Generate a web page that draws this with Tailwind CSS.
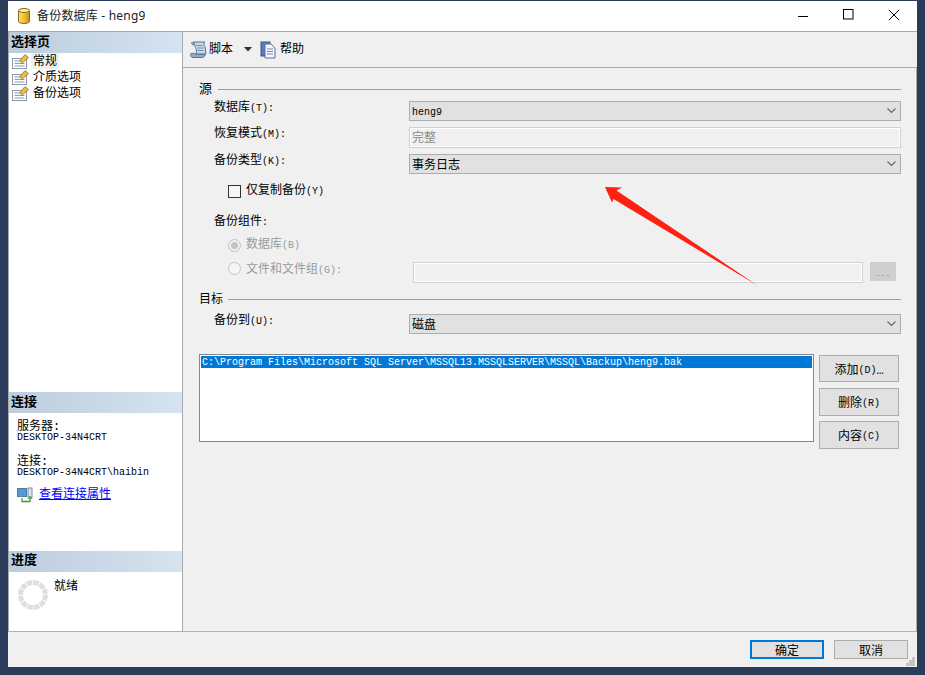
<!DOCTYPE html>
<html>
<head>
<meta charset="utf-8">
<script src="https://cdn.jsdelivr.net/npm/@tailwindcss/browser@4"></script>
</head>
<body class="m-0 overflow-hidden">
<div class="relative w-[925px] h-[675px] bg-[#2b3c5b] pl-2 pt-px pr-2 pb-2 font-['Liberation_Mono','Noto_Sans_CJK_SC',monospace] text-xs text-black">
  <div class="w-[909px] h-[666px] flex flex-col bg-[#f0f0f0]">
    <!-- title bar -->
    <div class="h-[31px] shrink-0 bg-white border-b border-[#a9a9a9] flex items-center pl-[10px]">
      <svg class="w-[12px] h-[16px] shrink-0" viewBox="0 0 12 16"><defs><linearGradient id="db" x1="0" x2="1" y1="0" y2="0"><stop offset="0" stop-color="#f9e07a"/><stop offset=".5" stop-color="#f2c032"/><stop offset="1" stop-color="#c98d10"/></linearGradient></defs><path d="M.5 2.500v11c0 1 2.500 2 5.500 2s5.500-1 5.500-2v-11z" fill="url(#db)" stroke="#8c6a1c"/><ellipse cx="6" cy="2.500" rx="5.500" ry="2" fill="#fbeaa0" stroke="#8c6a1c"/></svg>
      <span class="ml-[7px] text-[12px] text-[#222] font-['Noto_Sans','Noto_Sans_CJK_SC',sans-serif] tracking-[0.2px]">备份数据库 - heng9</span>
      <div class="ml-auto flex items-center h-full pb-[2px]">
        <svg class="w-[12px] h-[12px] mr-[34px]" viewBox="0 0 12 12"><path d="M1 7.500h10" stroke="#000" stroke-width="1"/></svg>
        <svg class="w-[12px] h-[12px] mr-[33px]" viewBox="0 0 12 12"><rect x=".5" y=".5" width="9.500" height="9.500" fill="none" stroke="#000"/></svg>
        <svg class="w-[12px] h-[12px] mr-[17px]" viewBox="0 0 12 12"><path d="M.8.8l10.400 10.400M11.200.8L.8 11.200" stroke="#000" stroke-width="1"/></svg>
      </div>
    </div>
    <div class="flex flex-1 min-h-0 border-b border-[#b0b0b8]">
      <!-- left pane -->
      <div class="w-[175px] shrink-0 bg-white border-x border-[#a9a9b0] flex flex-col">
        <div class="h-[21px] shrink-0 bg-gradient-to-r from-[#bccddd] to-[#d6e3f0] pl-[2px] text-[13px] font-bold leading-[21px]">选择页</div>
        <div class="h-[339px] shrink-0">
          <div class="h-[16px] flex items-center"><svg class="w-[17px] h-[16px] ml-[3px] shrink-0" viewBox="0 0 17 16"><rect x=".5" y="5.500" width="14" height="10" fill="#fff" stroke="#8b98a8"/><path d="M2.500 8h5M2.500 10.500h10M2.500 13h10" stroke="#7f9cc0"/><path d="M7.500 8L13 1.500l3.500 3-6 5.500z" fill="#ecbf3f" stroke="#76662a" stroke-width=".7"/></svg><span class="ml-[2px] w-[28px] h-[16px] bg-[#f0f0f0] pl-[2px] pt-[3px] leading-[13px]">常规</span></div>
          <div class="h-[16px] flex items-center"><svg class="w-[17px] h-[16px] ml-[3px] shrink-0" viewBox="0 0 17 16"><rect x=".5" y="5.500" width="14" height="10" fill="#fff" stroke="#8b98a8"/><path d="M2.500 8h5M2.500 10.500h10M2.500 13h10" stroke="#7f9cc0"/><path d="M7.500 8L13 1.500l3.500 3-6 5.500z" fill="#ecbf3f" stroke="#76662a" stroke-width=".7"/></svg><span class="ml-[4px] pt-[3px] leading-[13px]">介质选项</span></div>
          <div class="h-[16px] flex items-center"><svg class="w-[17px] h-[16px] ml-[3px] shrink-0" viewBox="0 0 17 16"><rect x=".5" y="5.500" width="14" height="10" fill="#fff" stroke="#8b98a8"/><path d="M2.500 8h5M2.500 10.500h10M2.500 13h10" stroke="#7f9cc0"/><path d="M7.500 8L13 1.500l3.500 3-6 5.500z" fill="#ecbf3f" stroke="#76662a" stroke-width=".7"/></svg><span class="ml-[4px] pt-[3px] leading-[13px]">备份选项</span></div>
        </div>
        <div class="h-[21px] shrink-0 bg-gradient-to-r from-[#bccddd] to-[#d6e3f0] pl-[2px] text-[13px] font-bold leading-[22px]">连接</div>
        <div class="h-[138px] shrink-0 pl-[8px] pt-[9px]">
          <div class="leading-[10px]">服务器:</div>
          <div class="leading-[11px] text-[10px]">DESKTOP-34N4CRT</div>
          <div class="leading-[10px] mt-[14px]">连接:</div>
          <div class="leading-[11px] text-[10px]">DESKTOP-34N4CRT\haibin</div>
          <div class="flex items-center mt-[9px] h-[16px]">
            <svg class="w-[17px] h-[16px] shrink-0" viewBox="0 0 17 16"><rect x=".5" y="1.500" width="9" height="8" fill="#4f9be0" stroke="#5a7a9c"/><rect x="11" y="1" width="4" height="9" fill="#dfe6ee" stroke="#7b8a9c"/><path d="M5 11v3.500h8V10" fill="none" stroke="#2ea12e" stroke-width="1.300"/><path d="M11 12l2-2.500 2 2.500" fill="none" stroke="#2ea12e"/></svg>
            <a class="ml-[5px] text-[#0000ff] underline leading-[16px]">查看连接属性</a>
          </div>
        </div>
        <div class="h-[21px] shrink-0 bg-gradient-to-r from-[#bccddd] to-[#d6e3f0] pl-[2px] text-[13px] font-bold leading-[20px]">进度</div>
        <div class="flex-1 pl-[9px] pt-[7px] flex items-start">
          <svg class="w-[30px] h-[30px] shrink-0 mt-[1px]" viewBox="0 0 30 30"><circle cx="15" cy="15" r="12.500" fill="none" stroke="#dedede" stroke-width="5" stroke-dasharray="5.540 1"/></svg>
          <span class="ml-[6px] leading-[14px] mt-[1px]">就绪</span>
        </div>
      </div>
      <!-- right pane -->
      <div class="flex-1 flex flex-col min-w-0">
        <div class="h-[36px] shrink-0 border-b border-[#a9a9a9] flex items-center pl-[7px]">
          <svg class="w-[17px] h-[17px] shrink-0" viewBox="0 0 17 17"><path d="M3.500 1H15c-1.500 1-1.500 3 0 4.500l1 7.500H5.500c1.500-1.500 1-4.500 0-6.500z" fill="#c9d8e8" stroke="#52749c"/><path d="M.5 13.500c0-1.500 3-1.500 4.500-.5l10.500.5c-1 2-2 3-3 3H2.500c-1 0-2-1.500-2-3z" fill="#8fabc9" stroke="#52749c"/><path d="M1 2.500c1-1.500 3-1.500 3 0 0 1-1 2-1.500 1.500" fill="#8fabc9" stroke="#52749c"/><path d="M6.500 4.500h6M7.500 7h6M7.500 9.500h6" stroke="#6f8cad"/></svg>
          <span class="ml-[2px] leading-none">脚本</span>
          <svg class="w-[8px] h-[5px] ml-[11px]" viewBox="0 0 8 5"><path d="M0 0h8L4 4.500z" fill="#333"/></svg>
          <svg class="w-[17px] h-[18px] ml-[8px] shrink-0" viewBox="0 0 17 18"><rect x="1" y="1" width="9" height="14" fill="#5b7dc0" stroke="#3a5590"/><path d="M5 3h6l4 4v10H5z" fill="#f5f8fc" stroke="#56719f"/><path d="M7 8h6M7 10.500h6M7 13h6" stroke="#6d86ad"/></svg>
          <span class="ml-[3px] leading-none">帮助</span>
        </div>
        <div class="flex-1 border-r border-[#a9a9a9] pl-[16px] pr-[15px] relative">
          <!-- 源 -->
          <div class="flex items-center h-[14px] mt-[14px]"><span class="text-[13px] leading-none">源</span><div class="flex-1 ml-[6px] h-px bg-[#a0a0a0]"></div></div>
          <div class="flex items-start h-[20px] mt-[5px]"><div class="w-[210px] pl-[15px] leading-[14px] shrink-0">数据库<span class="text-[10px]">(T):</span></div><div class="flex-1 h-[20px] bg-[#e1e1e1] border border-[#adadad] flex items-center pl-[2px] pr-[4px] pt-[3px] justify-between"><span class="text-[10px]">heng9</span><svg class="w-[9px] h-[6px] mt-[-3px]" viewBox="0 0 9 6"><path d="M.5.5l4 4 4-4" fill="none" stroke="#666" stroke-width="1.100"/></svg></div></div>
          <div class="flex items-start h-[21px] mt-[6px]"><div class="w-[210px] pl-[15px] leading-[14px] shrink-0">恢复模式<span class="text-[10px]">(M):</span></div><div class="flex-1 h-[21px] bg-[#f0f0f0] border border-[#d0d0d0] shadow-[inset_0_0_0_1px_#fff] flex items-center pl-[2px] pt-[2px] text-[#8a8a8a]">完整</div></div>
          <div class="flex items-start h-[20px] mt-[6px]"><div class="w-[210px] pl-[15px] leading-[14px] shrink-0">备份类型<span class="text-[10px]">(K):</span></div><div class="flex-1 h-[20px] bg-[#e1e1e1] border border-[#adadad] flex items-center pl-[2px] pr-[4px] pt-[3px] justify-between"><span>事务日志</span><svg class="w-[9px] h-[6px] mt-[-3px]" viewBox="0 0 9 6"><path d="M.5.5l4 4 4-4" fill="none" stroke="#666" stroke-width="1.100"/></svg></div></div>
          <div class="flex items-center h-[14px] mt-[10px] pl-[29px]"><div class="w-[13px] h-[13px] bg-[#f5f5f5] border border-[#333] shrink-0"></div><span class="ml-[5px]">仅复制备份<span class="text-[10px]">(Y)</span></span></div>
          <div class="pl-[15px] h-[14px] leading-[14px] mt-[17px]">备份组件<span class="text-[10px]">:</span></div>
          <div class="flex items-center h-[14px] mt-[9px] pl-[29px] text-[#9a9a9a]"><div class="w-[13px] h-[13px] rounded-full border border-[#c4c4c4] bg-[#f0f0f0] flex items-center justify-center shrink-0"><div class="w-[7px] h-[7px] rounded-full bg-[#c4c4c4]"></div></div><span class="ml-[5px]">数据库<span class="text-[10px]">(B)</span></span></div>
          <div class="flex items-start h-[24px] mt-[7px] pl-[29px] text-[#9a9a9a]"><div class="w-[13px] h-[13px] mt-[3px] rounded-full border border-[#c4c4c4] bg-[#f5f5f5] shrink-0"></div><span class="ml-[5px] mt-[4px] leading-[14px] w-[167px]">文件和文件组<span class="text-[10px]">(G):</span></span><div class="w-[450px] h-[21px] mt-[3px] border border-[#d0d0d0] shadow-[inset_0_0_0_1px_#fff] shrink-0"></div><div class="w-[26px] h-[19px] ml-[7px] mt-[3px] bg-[#cfcfcf] flex items-end justify-center pb-[3px] shrink-0 text-[8px] leading-none text-[#7a7a7a]">...</div></div>
          <!-- 目标 -->
          <div class="flex items-center h-[14px] mt-[9px]"><span class="leading-none pt-[2px]">目标</span><div class="flex-1 ml-[5px] h-px bg-[#a0a0a0]"></div></div>
          <div class="flex items-start h-[20px] mt-[8px]"><div class="w-[210px] pl-[15px] leading-[14px] shrink-0">备份到<span class="text-[10px]">(U):</span></div><div class="flex-1 h-[20px] bg-[#e1e1e1] border border-[#adadad] flex items-center pl-[2px] pr-[4px] pt-[3px] justify-between"><span>磁盘</span><svg class="w-[9px] h-[6px] mt-[-3px]" viewBox="0 0 9 6"><path d="M.5.5l4 4 4-4" fill="none" stroke="#666" stroke-width="1.100"/></svg></div></div>
          <div class="flex mt-[20px] gap-[5px]">
            <div class="w-[615px] h-[88px] bg-white border border-[#82878f] p-px shrink-0"><div class="h-[12px] bg-[#0078d7] pl-px text-white text-[10px] leading-[14px] whitespace-nowrap overflow-hidden">C:\Program Files\Microsoft SQL Server\MSSQL13.MSSQLSERVER\MSSQL\Backup\heng9.bak</div></div>
            <div class="w-[80px] flex flex-col mt-px">
              <div class="h-[27px] bg-[#e1e1e1] border border-[#adadad] flex items-center justify-center pt-[4px]">添加<span class="text-[10px]">(D)</span>…</div>
              <div class="h-[28px] mt-[6px] bg-[#e1e1e1] border border-[#adadad] flex items-center justify-center pt-[4px]">删除<span class="text-[10px]">(R)</span></div>
              <div class="h-[28px] mt-[5px] bg-[#e1e1e1] border border-[#adadad] flex items-center justify-center pt-[4px]">内容<span class="text-[10px]">(C)</span></div>
            </div>
          </div>
        </div>
      </div>
    </div>
    <!-- footer -->
    <div class="h-[35px] shrink-0 relative flex items-start justify-end gap-[10px] pt-[8px] pr-[9px]">
      <div class="w-[74px] h-[19px] bg-[#e1e1e1] border-2 border-[#0078d7] flex items-center justify-center pt-[4px]">确定</div>
      <div class="w-[74px] h-[19px] bg-[#e1e1e1] border border-[#adadad] flex items-center justify-center pt-[4px]">取消</div>
      <svg class="absolute right-[2px] bottom-[1px] w-[9px] h-[9px]" viewBox="0 0 9 9"><path d="M6 0h3v3H6zM3 3h3v3H3zM6 3h3v3H6zM0 6h3v3H0zM3 6h3v3H3zM6 6h3v3H6z" fill="#c4c4c4"/></svg>
    </div>
  </div>
  <!-- annotation arrow -->
  <svg class="absolute left-0 top-0 w-[925px] h-[675px] pointer-events-none" viewBox="0 0 925 675"><polygon points="605,187 622,187.500 616.500,190.500 757.500,285.500 613.500,199 612,202.500" fill="#fe2010"/></svg>
</div>
</body>
</html>
